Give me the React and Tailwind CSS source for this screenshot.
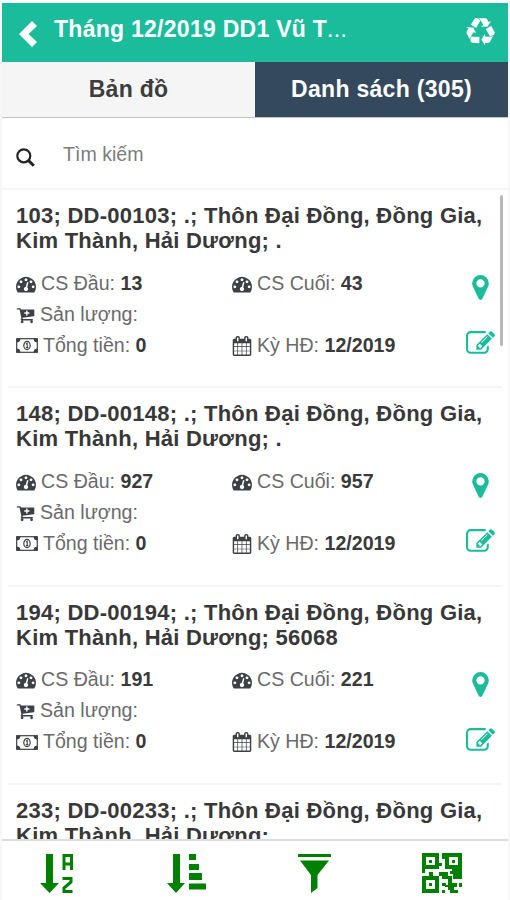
const records = [
  { id: '103', tail: '.', first: '13', last: '43' },
  { id: '148', tail: '.', first: '927', last: '957' },
  { id: '194', tail: '56068', first: '191', last: '221' },
  { id: '233', tail: '' },
];

function Glyph({ d, className }) {
  return (
    <svg viewBox="0 0 1792 1792" fill="currentColor" className={className}>
      <path d={d} />
    </svg>
  );
}

const dashboardPath =
  'M384 1152q0-53-37.5-90.5t-90.5-37.5-90.5 37.5-37.5 90.5 37.5 90.5 90.5 37.5 90.5-37.5 37.5-90.5zm192-448q0-53-37.5-90.5t-90.5-37.5-90.5 37.5-37.5 90.5 37.5 90.5 90.5 37.5 90.5-37.5 37.5-90.5zm428 481l101-382q6-26-7.5-48.5t-38.5-29.5-48 6.5-30 39.5l-101 382q-60 5-107 43.5t-63 98.5q-20 77 20 146t117 89 146-20 89-117q16-60-6-117t-72-91zm660-33q0-53-37.5-90.5t-90.5-37.5-90.5 37.5-37.5 90.5 37.5 90.5 90.5 37.5 90.5-37.5 37.5-90.5zm-640-640q0-53-37.5-90.5t-90.5-37.5-90.5 37.5-37.5 90.5 37.5 90.5 90.5 37.5 90.5-37.5 37.5-90.5zm448 192q0-53-37.5-90.5t-90.5-37.5-90.5 37.5-37.5 90.5 37.5 90.5 90.5 37.5 90.5-37.5 37.5-90.5zm320 448q0 261-141 483-19 29-54 29h-1402q-35 0-54-29-141-221-141-483 0-182 71-348t191-286 286-191 348-71 348 71 286 191 191 286 71 348z';
const cartPath =
  'M1280 704q0-26-19-45t-45-19h-128v-128q0-26-19-45t-45-19-45 19-19 45v128h-128q-26 0-45 19t-19 45 19 45 45 19h128v128q0 26 19 45t45 19 45-19 19-45v-128h128q26 0 45-19t19-45zm-576 832q0 53-37.5 90.5t-90.5 37.5-90.5-37.5-37.5-90.5 37.5-90.5 90.5-37.5 90.5 37.5 37.5 90.5zm896 0q0 53-37.5 90.5t-90.5 37.5-90.5-37.5-37.5-90.5 37.5-90.5 90.5-37.5 90.5 37.5 37.5 90.5zm128-1088v512q0 24-16 42.5t-41 21.5l-1044 122q1 7 4.5 21.5t6 26.5 2.5 22.5q0 16-24 64h920q26 0 45 19t19 45-19 45-45 19h-1024q-26 0-45-19t-19-45q0-14 11-39.5t29.5-59.5 20.5-38l-177-823h-204q-26 0-45-19t-19-45 19-45 45-19h256q16 0 28.5 6.5t20 15.5 13 24.5 7.5 26.5 5.5 29.5 4.5 25.5h1201q26 0 45 19t19 45z';
const calendarPath =
  'M192 1664h288v-288h-288v288zm352 0h320v-288h-320v288zm-352-352h288v-320h-288v320zm352 0h320v-320h-320v320zm-352-384h288v-288h-288v288zm736 736h320v-288h-320v288zm-384-736h320v-288h-320v288zm768 736h288v-288h-288v288zm-384-352h320v-320h-320v320zm-352-864v-288q0-13-9.5-22.5t-22.5-9.5h-64q-13 0-22.5 9.5t-9.5 22.5v288q0 13 9.5 22.5t22.5 9.5h64q13 0 22.5-9.5t9.5-22.5zm736 864h288v-320h-288v320zm-384-384h320v-288h-320v288zm384 0h288v-288h-288v288zm32-480v-288q0-13-9.5-22.5t-22.5-9.5h-64q-13 0-22.5 9.5t-9.5 22.5v288q0 13 9.5 22.5t22.5 9.5h64q13 0 22.5-9.5t9.5-22.5zm384-64v1280q0 52-38 90t-90 38h-1408q-52 0-90-38t-38-90v-1280q0-52 38-90t90-38h128v-96q0-66 47-113t113-47h64q66 0 113 47t47 113v96h384v-96q0-66 47-113t113-47h64q66 0 113 47t47 113v96h128q52 0 90 38t38 90z';
const markerPath =
  'M1152 640q0-106-75-181t-181-75-181 75-75 181 75 181 181 75 181-75 75-181zm256 0q0 109-33 179l-364 774q-16 33-47.5 52t-67.5 19-67.5-19-46.5-52l-365-774q-33-70-33-179 0-212 150-362t362-150 362 150 150 362z';
const editPath =
  'M888 1184l116-116-152-152-116 116v56h96v96h56zm440-720q-16-16-33 1l-350 350q-17 17-1 33t33-1l350-350q17-17 1-33zm80 594v190q0 119-84.5 203.5t-203.5 84.5h-832q-119 0-203.5-84.5t-84.5-203.5v-832q0-119 84.5-203.5t203.5-84.5h832q63 0 117 25 15 7 18 23 3 17-9 29l-49 49q-14 14-32 8-23-6-45-6h-832q-66 0-113 47t-47 113v832q0 66 47 113t113 47h832q66 0 113-47t47-113v-126q0-13 9-22l64-64q15-15 35-7t20 29zm-96-738l288 288-672 672h-288v-288zm444 132l-92 92-288-288 92-92q28-28 68-28t68 28l152 152q28 28 28 68t-28 68z';
const recyclePath =
  'M836 1169l-15 368-2 22-420-29q-36-3-67-31.5t-47-65.5q-11-27-14.5-55t4-65 12-55 21.5-64 19-53q78 12 509 28zm-387-586l180 379-147-92q-63 72-111.5 144.5t-72.5 125-39.5 94.5-18.5 63l-4 21-190-357q-17-26-18-56t6-47l8-18q35-63 114-188l-140-86zm1231 517l-188 359q-12 29-36.5 46.5t-43.5 20.5l-18 4q-71 7-219 12l8 164-230-367 211-362 7 173q170 16 283 5t170-33zm-785-924q-47 63-265 435l-317-187-19-12 225-356q20-31 60-45t80-10q24 2 48.5 12t42 21 41.5 33 36 34.5 36 39.5 32 35zm655 307l212 363q18 37 12.5 76t-27.5 74q-13 20-33 37t-38 28-48.5 22-47 16-51.5 14-46 12q-34-72-265-436l313-195zm-143-226l142-83-220 373-419-20 151-86q-34-89-75-166t-75.5-123.5-64.5-80-47-46.5l-17-13 405 1q31-3 58 10.5t39 28.5l11 15q39 61 112 190z';

function MoneyIcon() {
  return (
    <svg viewBox="0 0 22 15" className="h-[15px] w-[22px] shrink-0" fill="none" stroke="currentColor">
      <rect x="0.7" y="0.7" width="20.6" height="13.6" strokeWidth="1.2" />
      <path d="M1 4a3 3 0 0 0 3-3H1zM21 4a3 3 0 0 1-3-3h3zM1 11a3 3 0 0 1 3 3H1zM21 11a3 3 0 0 0-3 3h3z" fill="currentColor" />
      <ellipse cx="11" cy="7.5" rx="3.2" ry="4.1" strokeWidth="1.2" />
      <path d="M10 6l1.2-.8v4.3M9.8 9.6h2.6" strokeWidth="1.1" />
    </svg>
  );
}

function Field({ icon, label, value, className }) {
  return (
    <div className={`flex h-[31px] items-center text-[19.6px] whitespace-nowrap text-[#6a6a6a] ${className || ''}`}>
      <span className="flex shrink-0 text-[#3d4145]">{icon}</span>
      <span className="ml-[5px]">
        {label} <b className="text-[#3a3a3a]">{value}</b>
      </span>
    </div>
  );
}

function Details({ item }) {
  const gauge = <Glyph d={dashboardPath} className="h-5 w-5" />;
  return (
    <div className="mt-[15px] flex">
      <div className="w-[216px]">
        <Field icon={gauge} label="CS Đầu:" value={item.first} />
        <Field icon={<Glyph d={cartPath} className="h-[20px] w-[19px]" />} label="Sản lượng:" />
        <Field icon={<MoneyIcon />} label="Tổng tiền:" value="0" />
      </div>
      <div className="w-[232px]">
        <Field icon={gauge} label="CS Cuối:" value={item.last} className="mb-[31px]" />
        <Field icon={<Glyph d={calendarPath} className="h-5 w-5" />} label="Kỳ HĐ:" value="12/2019" />
      </div>
      <div className="-mr-1 flex w-8 shrink-0 flex-col items-center text-[#1abc9c]">
        <Glyph d={markerPath} className="mt-[5px] h-[29px] w-[29px]" />
        <Glyph d={editPath} className="mt-[27px] h-[29px] w-[29px]" />
      </div>
    </div>
  );
}

function Record({ item }) {
  return (
    <div className="mx-[6px] h-[198.3px] shrink-0 border-b-2 border-[#f5f5f5] px-2 pt-[13px]">
      <h2 className="text-[22px] leading-[25px] font-bold tracking-[0.25px] whitespace-nowrap text-[#383838]">
        {item.id}; DD-00{item.id}; .; Thôn Đại Đồng, Đồng Gia,
        <br />
        Kim Thành, Hải Dương; {item.tail}
      </h2>
      {item.first && <Details item={item} />}
    </div>
  );
}

function SortAZ() {
  return (
    <svg viewBox="0 0 33 40" className="h-10 w-[33px]" fill="none" stroke="currentColor">
      <path d="M6 1h7v29h6l-9.5 10L0 30h6z" fill="currentColor" stroke="none" />
      <path d="M24 17V2.5h7.500V17M24 11h7.500M22.500 25.500H31V29l-7 6v3.500h8.500" strokeWidth="3" />
    </svg>
  );
}

function SortAmount() {
  return (
    <svg viewBox="0 0 39 40" className="h-10 w-[39px]" fill="currentColor">
      <path d="M6 1h7v29h5l-9 10L0 30h6zM22 1h7v6h-7zM22 11h10v6H22zM22 20h13v7H22zM22 30.500h17v6H22z" />
    </svg>
  );
}

function Funnel() {
  return (
    <svg viewBox="0 0 33 40" className="h-10 w-[33px]" fill="currentColor">
      <path d="M0 1h33v3H0zM2 7.500h29L19.500 22v13L13 40V22z" />
    </svg>
  );
}

function QrCode() {
  return (
    <svg viewBox="0 0 40 40" className="h-10 w-10" fill="currentColor">
      <path fillRule="evenodd" d="M0 0h17v16H0zM4 4v8h9V4zM23 0h17v16H23zM27 4v8h9V4zM0 23h17v17H0zM4 27v9h9v-9z" />
      <path d="M7 7h3v3H7zM30 7h3v3h-3zM7 30h3v3H7zM20 0h4v6h-4zM17 10h3v3h-3zM0 16h3v4H0zM7 19h4v4H7zM17 19h9v4h4v8h-4v-5h-6v-3h-3zM30 16h10v10h-9v-5h-3v-3h2zM20 30h4v3h-4zM26 30h9v4h-3v3h-6v-3h-3v-2h3zM37 30h3v4h-3zM20 37h3v3h-3zM28 37h8v3h-8z" />
    </svg>
  );
}

export default function App() {
  return (
    <div className="flex h-[900px] w-[510px] flex-col overflow-hidden border-r-2 border-l-2 border-[#f7f7f7] bg-white pt-[3px] font-['Liberation_Sans',Arial,sans-serif]">
      {/* Header */}
      <header className="flex h-[59px] shrink-0 items-center bg-[#1abc9c] text-white">
        <svg viewBox="0 0 18 26" className="mt-[3px] ml-[17px] h-[26px] w-[18px]" fill="currentColor">
          <path d="M13 0l5 5-8.500 8 8.500 8-5 5L0 13z" />
        </svg>
        <h1 className="mb-[7px] ml-[17px] flex-1 text-[23px] leading-7 font-bold tracking-[0.27px]">
          Tháng 12/2019 DD1 Vũ T<span className="font-normal">...</span>
        </h1>
        <Glyph d={recyclePath} className="mr-[13px] h-[29px] w-[29px]" />
      </header>

      {/* Tabs */}
      <nav className="grid h-[56px] shrink-0 grid-cols-2 border-b border-[#c4c4c4] text-center text-[23px] leading-[53px] font-bold tracking-[0.3px]">
        <button className="bg-[#f5f5f5] text-[#3d3d3d]">Bản đồ</button>
        <button className="bg-[#34495e] text-white">Danh sách (305)</button>
      </nav>

      {/* Search */}
      <div className="flex h-[72px] shrink-0 items-center border-b-2 border-[#f5f5f5] pt-1 pl-[14px]">
        <svg viewBox="0 0 19 19" className="mt-1 h-[19px] w-[19px] text-[#222]" fill="none" stroke="currentColor">
          <circle cx="7.8" cy="7.8" r="6.5" strokeWidth="2.2" />
          <path d="M12.5 12.5l5.3 5.3" strokeWidth="3" />
        </svg>
        <span className="ml-[28px] text-[19.6px] text-[#7c7c7c]">Tìm kiếm</span>
      </div>

      {/* Record list */}
      <main className="relative flex min-h-0 flex-1 flex-col overflow-hidden">
        {records.map((item) => (
          <Record key={item.id} item={item} />
        ))}
        <div className="absolute top-[5px] right-[5px] h-[151px] w-[3px] rounded bg-[#b8b8b8]" />
      </main>

      {/* Bottom actions */}
      <footer className="flex h-[61px] shrink-0 items-center border-t-2 border-[#ddd] pt-[4px] text-[#008000]">
        <button className="flex flex-1 justify-center pr-[21px]"><SortAZ /></button>
        <button className="flex flex-1 justify-center pr-[18px]"><SortAmount /></button>
        <button className="flex flex-1 justify-center pr-[19px]"><Funnel /></button>
        <button className="flex flex-1 justify-center pr-[11px]"><QrCode /></button>
      </footer>
    </div>
  );
}
